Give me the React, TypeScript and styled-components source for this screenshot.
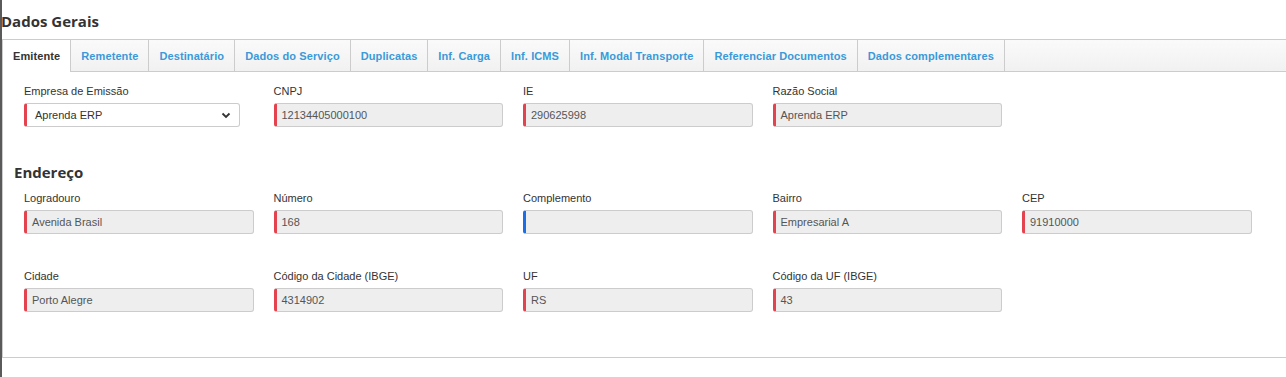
import React from 'react';
import styled, { createGlobalStyle } from 'styled-components';

const GlobalStyle = createGlobalStyle`
    body {
        margin: 0;
        background: #fff;
        font-family: 'Liberation Sans', Arial, sans-serif;
    }
`;

const Page = styled.div`
    min-height: 377px;
    border-left: 2px solid #5a5a5a;
    box-sizing: border-box;
    overflow: hidden;
`;

const Title = styled.h2`
    margin: 0 0 8px -1px;
    padding-top: 11px;
    font-family: 'Open Sans', sans-serif;
    font-size: 15px;
    line-height: 20px;
    font-weight: 700;
    color: #333;
`;

const Panel = styled.div`
    border: 1px solid #ccc;
    border-right: none;
    width: 1400px;
`;

const TabBar = styled.div`
    display: flex;
    height: 31px;
    background: linear-gradient(#fafafa, #f1f1f1);
    border-bottom: 1px solid #ccc;
`;

const Tab = styled.div<{ $active?: boolean }>`
    display: flex;
    align-items: center;
    padding: 0 10px;
    border-right: 1px solid #ccc;
    font-size: 11px;
    font-weight: 700;
    letter-spacing: 0.1px;
    white-space: nowrap;
    color: ${({ $active }) => ($active ? '#333' : '#3a9ad9')};
    background: ${({ $active }) => ($active ? '#fff' : 'transparent')};
    height: ${({ $active }) => ($active ? '32px' : '31px')};
`;

const Content = styled.div`
    padding: 12px 12px 10px 11px;
`;

const SectionTitle = styled.h3`
    margin: 35px 0 9px 0;
    font-family: 'Open Sans', sans-serif;
    font-size: 15px;
    line-height: 20px;
    font-weight: 700;
    color: #333;
`;

const FieldRow = styled.div`
    display: grid;
    grid-template-columns: repeat(5, 229.5px);
    column-gap: 20px;
    padding-left: 10px;
    margin-bottom: 35px;
`;

const Field = styled.div`
    display: flex;
    flex-direction: column;
    gap: 4px;
`;

const Label = styled.label`
    font-size: 11px;
    line-height: 15px;
    color: #333;
`;

const Input = styled.div<{ $accent: string }>`
    height: 24px;
    box-sizing: border-box;
    display: flex;
    align-items: center;
    padding-left: 5px;
    background: #eee;
    border: 1px solid #ccc;
    border-left: 3px solid ${({ $accent }) => $accent};
    border-radius: 3px;
    font-size: 11px;
    color: #555;
`;

const Select = styled(Input)`
    width: 216px;
    background: #fff;
    justify-content: space-between;
    padding-left: 8px;
    padding-right: 8px;
    color: #333;
`;

const RED = '#e3434f';
const BLUE = '#1a6ee8';

const tabs = [
    'Emitente',
    'Remetente',
    'Destinatário',
    'Dados do Serviço',
    'Duplicatas',
    'Inf. Carga',
    'Inf. ICMS',
    'Inf. Modal Transporte',
    'Referenciar Documentos',
    'Dados complementares',
];

type F = { label: string; value: string; accent?: string };

const row1: F[] = [
    { label: 'CNPJ', value: '12134405000100' },
    { label: 'IE', value: '290625998' },
    { label: 'Razão Social', value: 'Aprenda ERP' },
];

const row2: F[] = [
    { label: 'Logradouro', value: 'Avenida Brasil' },
    { label: 'Número', value: '168' },
    { label: 'Complemento', value: '', accent: BLUE },
    { label: 'Bairro', value: 'Empresarial A' },
    { label: 'CEP', value: '91910000' },
];

const row3: F[] = [
    { label: 'Cidade', value: 'Porto Alegre' },
    { label: 'Código da Cidade (IBGE)', value: '4314902' },
    { label: 'UF', value: 'RS' },
    { label: 'Código da UF (IBGE)', value: '43' },
];

const Fields = ({ items }: { items: F[] }) => (
    <>
        {items.map((f) => (
            <Field key={f.label}>
                <Label>{f.label}</Label>
                <Input $accent={f.accent || RED}>{f.value}</Input>
            </Field>
        ))}
    </>
);

export default function App() {
    return (
        <Page>
            <GlobalStyle />
            <Title>Dados Gerais</Title>
            <Panel>
                <TabBar>
                    {tabs.map((t, i) => (
                        <Tab key={t} $active={i === 0}>
                            {t}
                        </Tab>
                    ))}
                </TabBar>
                <Content>
                    <FieldRow>
                        <Field>
                            <Label>Empresa de Emissão</Label>
                            <Select $accent={RED}>
                                <span>Aprenda ERP</span>
                                <svg width='10' height='7' viewBox='0 0 10 7'>
                                    <path
                                        d='M1.5 1.5 L5 5 L8.5 1.5'
                                        fill='none'
                                        stroke='#333'
                                        strokeWidth='1.8'
                                    />
                                </svg>
                            </Select>
                        </Field>
                        <Fields items={row1} />
                    </FieldRow>
                    <SectionTitle>Endereço</SectionTitle>
                    <FieldRow>
                        <Fields items={row2} />
                    </FieldRow>
                    <FieldRow>
                        <Fields items={row3} />
                    </FieldRow>
                </Content>
            </Panel>
        </Page>
    );
}
